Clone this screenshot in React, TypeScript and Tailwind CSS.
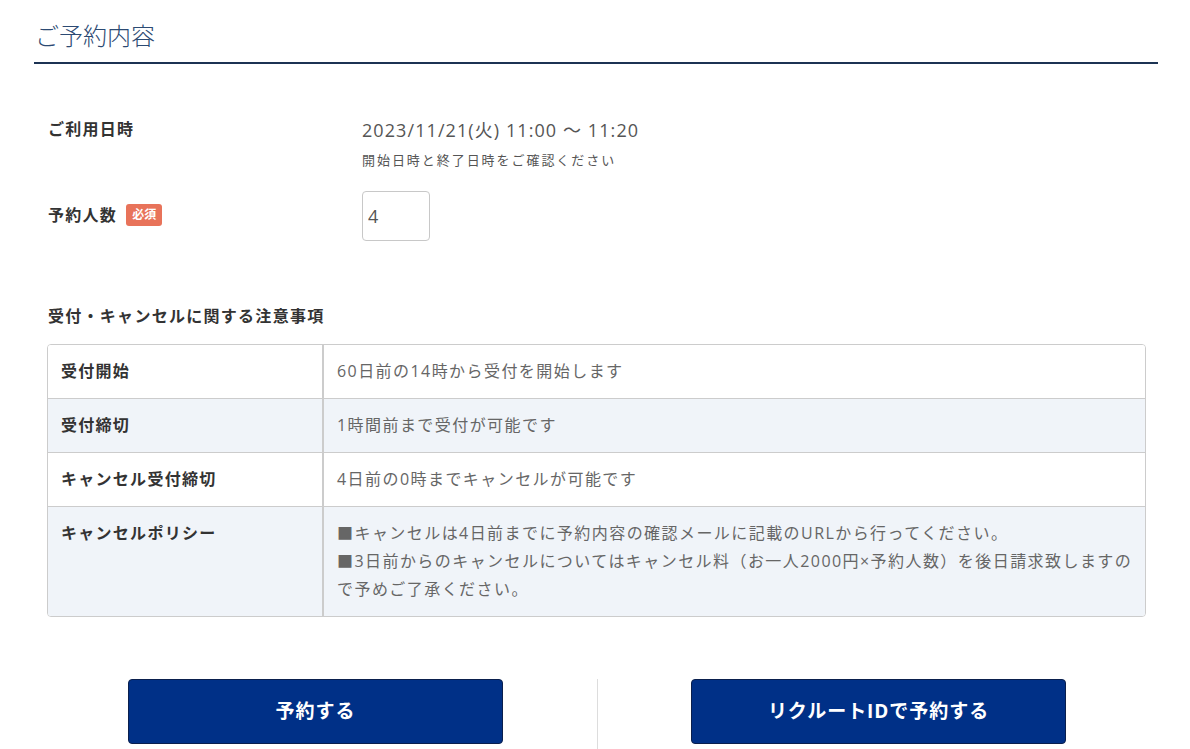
import React from 'react';

const rows = [
  { label: '受付開始', value: ['60日前の14時から受付を開始します'] },
  { label: '受付締切', value: ['1時間前まで受付が可能です'] },
  { label: 'キャンセル受付締切', value: ['4日前の0時までキャンセルが可能です'] },
  {
    label: 'キャンセルポリシー',
    value: [
      '■キャンセルは4日前までに予約内容の確認メールに記載のURLから行ってください。',
      '■3日前からのキャンセルについてはキャンセル料（お一人2000円×予約人数）を後日請求致しますので予めご了承ください。',
    ],
  },
];

export default function App() {
  return (
    <div
      className="w-[1190px] h-[749px] overflow-hidden bg-white"
      style={{ fontFamily: '"Open Sans", "Noto Sans CJK JP", sans-serif' }}
    >
      <div className="ml-[34px] w-[1124px]">
        {/* heading */}
        <div className="pt-[19px] pb-[9px] border-b-2 border-[#1c3353]">
          <h2 className="pl-[1px] text-[24px] leading-[34px] font-light text-[#2c4a73]">ご予約内容</h2>
        </div>

        {/* form */}
        <div className="pl-[14px] pt-[49px]">
          <div className="flex">
            <div className="w-[314px] text-[16px] leading-[24px] font-bold text-[#333] pt-[4px] tracking-[0.08em]">ご利用日時</div>
            <div>
              <div className="text-[18px] leading-[28px] text-[#555] pt-[3px] tracking-[0.06em]">2023/11/21(火) 11:00 〜 11:20</div>
              <div className="text-[13px] leading-[18px] text-[#555] mt-[7px] tracking-[0.15em]">開始日時と終了日時をご確認ください</div>
            </div>
          </div>
          <div className="flex items-center mt-[22px]">
            <div className="w-[314px] flex items-center gap-[9px] -mt-[3px]">
              <span className="text-[16px] leading-[24px] font-bold text-[#333] tracking-[0.08em]">予約人数</span>
              <span className="px-[6px] rounded-[3px] bg-[#e8735a] text-white text-[12px] leading-[22px] font-bold">必須</span>
            </div>
            <input
              defaultValue="4"
              className="w-[68px] h-[50px] border border-[#c8c8c8] rounded-[4px] px-[5px] text-[18px] text-[#555] outline-none"
            />
          </div>

          <h3 className="mt-[63px] text-[16px] leading-[24px] font-bold text-[#333] tracking-[0.08em]">受付・キャンセルに関する注意事項</h3>
        </div>

        {/* table */}
        <div className="ml-[13px] mr-[12px] mt-[16px] border border-[#cccccc] rounded-[4px] overflow-hidden">
          {rows.map((r, i) => (
            <div
              key={r.label}
              className={`flex ${i % 2 === 1 ? 'bg-[#f0f4f9]' : 'bg-white'} ${i > 0 ? 'border-t border-[#cccccc]' : ''}`}
            >
              <div className="w-[276px] shrink-0 border-r-2 border-[#cccccc] px-[13px] pt-[12px] pb-[13px] text-[16px] leading-[28px] font-bold text-[#333] tracking-[0.08em]">
                {r.label}
              </div>
              <div className="flex-1 pl-[13px] pr-[10px] pt-[12px] pb-[13px] text-[16px] leading-[28px] text-[#666] tracking-[0.09em]">
                {r.value.map((v) => (
                  <div key={v}>{v}</div>
                ))}
              </div>
            </div>
          ))}
        </div>

        {/* buttons */}
        <div className="flex mt-[62px]">
          <div className="w-[563px] flex justify-end pr-[94px]">
            <button className="w-[375px] h-[65px] rounded-[4px] bg-[#003087] border border-[#0a1f4d] text-white text-[19px] font-bold tracking-[0.05em]">
              予約する
            </button>
          </div>
          <div className="w-px h-[80px] bg-[#dddddd]" />
          <div className="flex-1 flex justify-start pl-[93px]">
            <button className="w-[375px] h-[65px] rounded-[4px] bg-[#003087] border border-[#0a1f4d] text-white text-[19px] font-bold tracking-[0.05em]">
              リクルートIDで予約する
            </button>
          </div>
        </div>
      </div>
    </div>
  );
}
